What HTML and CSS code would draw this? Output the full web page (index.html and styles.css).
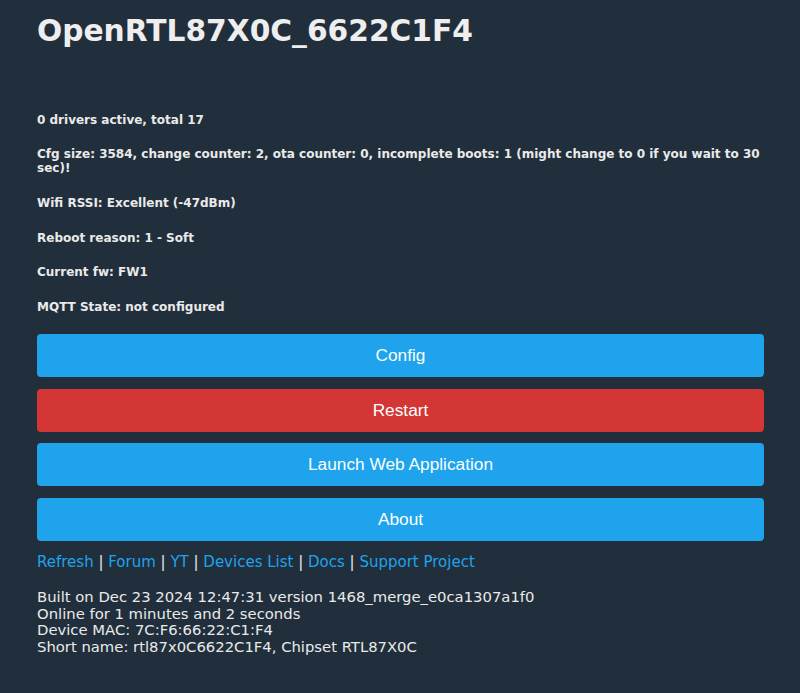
FILE: index.html
```html
<!DOCTYPE html>
<html lang="en">
<head>
<meta charset="utf-8">
<title>OpenRTL87X0C_6622C1F4</title>
<link rel="stylesheet" href="styles.css">
</head>
<body>
<div class="page">
  <h1 class="title">OpenRTL87X0C_6622C1F4</h1>
  <div class="status">
    <p class="stat">0 drivers active, total 17</p>
    <p class="stat">Cfg size: 3584, change counter: 2, ota counter: 0, incomplete boots: 1 (might change to 0 if you wait to 30 sec)!</p>
    <p class="stat">Wifi RSSI: Excellent (-47dBm)</p>
    <p class="stat">Reboot reason: 1 - Soft</p>
    <p class="stat">Current fw: FW1</p>
    <p class="stat">MQTT State: not configured</p>
  </div>
  <div class="buttons">
    <button class="btn">Config</button>
    <button class="btn btn-red">Restart</button>
    <button class="btn">Launch Web Application</button>
    <button class="btn">About</button>
  </div>
  <div class="links">
    <a href="#">Refresh</a> | <a href="#">Forum</a> | <a href="#">YT</a> | <a href="#">Devices List</a> | <a href="#">Docs</a> | <a href="#">Support Project</a>
  </div>
  <div class="info">
    <div>Built on Dec 23 2024 12:47:31 version 1468_merge_e0ca1307a1f0</div>
    <div>Online for 1 minutes and 2 seconds</div>
    <div>Device MAC: 7C:F6:66:22:C1:F4</div>
    <div>Short name: rtl87x0C6622C1F4, Chipset RTL87X0C</div>
  </div>
</div>
</body>
</html>
```

FILE: styles.css
```css
html, body {
  margin: 0;
  padding: 0;
}
body {
  background: #212f3c;
  color: #eaeaea;
  font-family: "DejaVu Sans", Verdana, sans-serif;
}
.page {
  padding: 14px 36px 20px 37px;
}
.title {
  margin: 0;
  font-size: 29.7px;
  line-height: 34px;
  font-weight: bold;
  color: #eeeeee;
}
.status {
  margin-top: 64.6px;
}
.stat {
  margin: 0 0 20.7px 0;
  font-size: 12px;
  line-height: 14px;
  font-weight: bold;
}
.buttons {
  display: flex;
  flex-direction: column;
  gap: 11.8px;
  margin-top: -1px;
}
.btn {
  display: block;
  width: 100%;
  height: 43px;
  border: 0;
  border-radius: 4px;
  background: #1fa3ec;
  color: #faffff;
  font-family: "Liberation Sans", Arial, sans-serif;
  font-size: 17.3px;
  line-height: 43px;
  padding: 0;
  text-align: center;
}
.btn-red {
  background: #d43535;
}
.links {
  margin-top: 12.5px;
  font-size: 15px;
  line-height: 17.5px;
  color: #eaeaea;
}
.links a {
  color: #1fa3ec;
  text-decoration: none;
}
.info {
  margin-top: 18px;
  font-size: 14.8px;
  line-height: 16.6px;
}
```
